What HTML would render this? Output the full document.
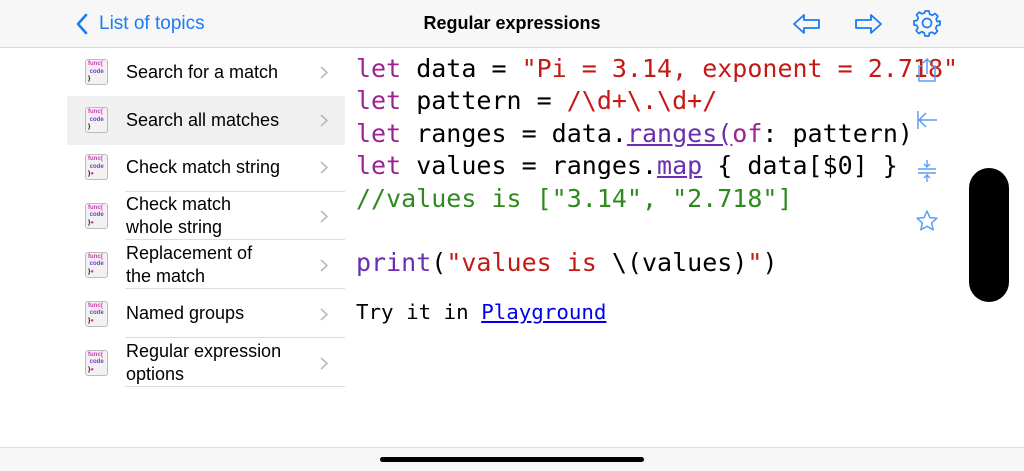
<!DOCTYPE html>
<html><head><meta charset="utf-8"><style>
*{margin:0;padding:0;box-sizing:border-box}
body{width:1024px;height:471px;overflow:hidden;background:#fff;position:relative;font-family:"Liberation Sans",sans-serif}
.top{position:absolute;left:0;top:0;width:1024px;height:48px;background:#f7f7f7;border-bottom:1px solid #d8d8d8}
.back{position:absolute;left:99px;top:13px;font-size:19px;color:#1a7cf5}
.title{position:absolute;left:0;width:1024px;text-align:center;top:13px;font-size:18px;font-weight:bold;color:#000}
.row{position:absolute;left:67px;width:278px;height:48.7px}
.row.sel{background:#f0f0f0}
.row .sep{position:absolute;left:58px;right:0;bottom:0;height:1px;background:#dcdcdc}
.row .t{position:absolute;left:59px;top:0;height:100%;display:flex;align-items:center;font-size:18px;line-height:23px;color:#000}
.row .ch{position:absolute;right:17px;top:50%;margin-top:-6px}
.ic{position:absolute;left:18px;top:50%;margin-top:-13px;width:23px;height:26px;border:1px solid #bbb;border-radius:3px;background:#f2f2f2;font-size:6px;line-height:7.5px;padding:1px 2px;font-weight:bold}
.code{position:absolute;left:356px;top:53px;font-family:"DejaVu Sans Mono",monospace;font-size:25px;line-height:32.4px;white-space:pre;color:#000}
.k{color:#9b2393}.s{color:#c41a16}.c{color:#2f8a1e}.u{color:#6a2fb0;text-decoration:underline}
.try{position:absolute;left:356px;top:300px;font-family:"DejaVu Sans Mono",monospace;font-size:20.8px;white-space:pre}
.try a{color:#0000ee;text-decoration:underline}
.bot{position:absolute;left:0;top:447px;width:1024px;height:24px;background:#f7f7f7;border-top:1px solid #ddd}
.home{position:absolute;left:380px;top:457px;width:264px;height:5px;border-radius:3px;background:#000}
.pill{position:absolute;left:969px;top:168px;width:40px;height:134px;border-radius:20px;background:#000}
</style></head><body>
<div class="top">
<svg style="position:absolute;left:74px;top:12px" width="16" height="24" viewBox="0 0 16 24"><path d="M12 3 L4 12 L12 21" fill="none" stroke="#1a7cf5" stroke-width="2.6" stroke-linecap="round" stroke-linejoin="round"/></svg>
<div class="back">List of topics</div>
<div class="title">Regular expressions</div>
<svg style="position:absolute;left:792px;top:12px" width="30" height="24" viewBox="0 0 30 24"><path d="M2 12 L12 3 V8 H27 V16 H12 V21 Z" fill="none" stroke="#1a7cf5" stroke-width="1.8" stroke-linejoin="round"/></svg>
<svg style="position:absolute;left:853px;top:12px" width="30" height="24" viewBox="0 0 30 24"><path d="M28 12 L18 3 V8 H3 V16 H18 V21 Z" fill="none" stroke="#1a7cf5" stroke-width="1.8" stroke-linejoin="round"/></svg>
<svg style="position:absolute;left:913px;top:9px" width="28" height="28" viewBox="0 0 28 28"><g fill="none" stroke="#1a7cf5" stroke-width="1.7"><circle cx="14" cy="14" r="4.5"/><path d="M12 2h4l.7 3.2 2.6 1.1 2.8-1.8 2.8 2.8-1.8 2.8 1.1 2.6L27 12v4l-3.2.7-1.1 2.6 1.8 2.8-2.8 2.8-2.8-1.8-2.6 1.1L16 27h-4l-.7-3.2-2.6-1.1-2.8 1.8-2.8-2.8 1.8-2.8-1.1-2.6L1 16v-4l3.2-.7 1.1-2.6-1.8-2.8 2.8-2.8 2.8 1.8 2.6-1.1z" stroke-linejoin="round"/></g></svg>
</div>

<div class="row" style="top:48px"><div class="ic"><span style="color:#d03ab0">func{</span><br><span style="color:#7a3ac0">&nbsp;code</span><br>}</div><div class="t">Search for a match</div><svg class="ch" width="8" height="13"><path d="M1 1l6 5.5L1 12" fill="none" stroke="#b8b8b8" stroke-width="1.6"/></svg><div class="sep"></div></div>
<div class="row sel" style="top:96px"><div class="ic"><span style="color:#d03ab0">func{</span><br><span style="color:#7a3ac0">&nbsp;code</span><br>}</div><div class="t">Search all matches</div><svg class="ch" width="8" height="13"><path d="M1 1l6 5.5L1 12" fill="none" stroke="#b8b8b8" stroke-width="1.6"/></svg></div>
<div class="row" style="top:143px"><div class="ic"><span style="color:#d03ab0">func{</span><br><span style="color:#7a3ac0">&nbsp;code</span><br>}<span style="color:#d03ab0">●</span></div><div class="t">Check match string</div><svg class="ch" width="8" height="13"><path d="M1 1l6 5.5L1 12" fill="none" stroke="#b8b8b8" stroke-width="1.6"/></svg><div class="sep"></div></div>
<div class="row" style="top:191.5px"><div class="ic"><span style="color:#d03ab0">func{</span><br><span style="color:#7a3ac0">&nbsp;code</span><br>}<span style="color:#d03ab0">●</span></div><div class="t">Check match<br>whole string</div><svg class="ch" width="8" height="13"><path d="M1 1l6 5.5L1 12" fill="none" stroke="#b8b8b8" stroke-width="1.6"/></svg><div class="sep"></div></div>
<div class="row" style="top:240.5px"><div class="ic"><span style="color:#d03ab0">func{</span><br><span style="color:#7a3ac0">&nbsp;code</span><br>}<span style="color:#d03ab0">●</span></div><div class="t">Replacement of<br>the match</div><svg class="ch" width="8" height="13"><path d="M1 1l6 5.5L1 12" fill="none" stroke="#b8b8b8" stroke-width="1.6"/></svg><div class="sep"></div></div>
<div class="row" style="top:289.5px"><div class="ic"><span style="color:#d03ab0">func{</span><br><span style="color:#7a3ac0">&nbsp;code</span><br>}<span style="color:#d03ab0">●</span></div><div class="t">Named groups</div><svg class="ch" width="8" height="13"><path d="M1 1l6 5.5L1 12" fill="none" stroke="#b8b8b8" stroke-width="1.6"/></svg><div class="sep"></div></div>
<div class="row" style="top:338.5px"><div class="ic"><span style="color:#d03ab0">func{</span><br><span style="color:#7a3ac0">&nbsp;code</span><br>}<span style="color:#d03ab0">●</span></div><div class="t">Regular expression<br>options</div><svg class="ch" width="8" height="13"><path d="M1 1l6 5.5L1 12" fill="none" stroke="#b8b8b8" stroke-width="1.6"/></svg><div class="sep"></div></div>

<div class="code"><span class="k">let</span> data = <span class="s">"Pi = 3.14, exponent = 2.718"</span>
<span class="k">let</span> pattern = <span class="s">/\d+\.\d+/</span>
<span class="k">let</span> ranges = data.<span class="u">ranges(</span><span class="k">of</span>: pattern)
<span class="k">let</span> values = ranges.<span class="u">map</span> { data[$0] }
<span class="c">//values is ["3.14", "2.718"]</span>

<span style="color:#6a2fb0">print</span>(<span class="s">"values is </span>\(values)<span class="s">"</span>)</div>
<div class="try">Try it in <a>Playground</a></div>

<svg style="position:absolute;left:915px;top:56px" width="24" height="28" viewBox="0 0 24 28"><g fill="none" stroke="#5aa0f0" stroke-width="1.5"><path d="M8 10H4v15h16V10h-4M12 3v15M8 7l4-4 4 4"/></g></svg>
<svg style="position:absolute;left:915px;top:108px" width="24" height="24" viewBox="0 0 24 24"><g fill="none" stroke="#5aa0f0" stroke-width="1.5"><path d="M3 3v18M22 12H5M11 5l-7 7 7 7"/></g></svg>
<svg style="position:absolute;left:915px;top:158px" width="24" height="26" viewBox="0 0 24 26"><g fill="none" stroke="#5aa0f0" stroke-width="1.4"><path d="M12 2v7M9 6l3 3 3-3M3 11h18M3 15h18M12 24v-7M9 20l3-3 3 3"/></g></svg>
<svg style="position:absolute;left:915px;top:209px" width="24" height="24" viewBox="0 0 24 24"><path d="M12 2l2.9 6.6 7.1.6-5.4 4.7 1.6 7L12 17.3 5.8 20.9l1.6-7L2 9.2l7.1-.6z" fill="none" stroke="#5aa0f0" stroke-width="1.5" stroke-linejoin="round"/></svg>

<div class="pill"></div>
<div class="bot"></div>
<div class="home"></div>
</body></html>
